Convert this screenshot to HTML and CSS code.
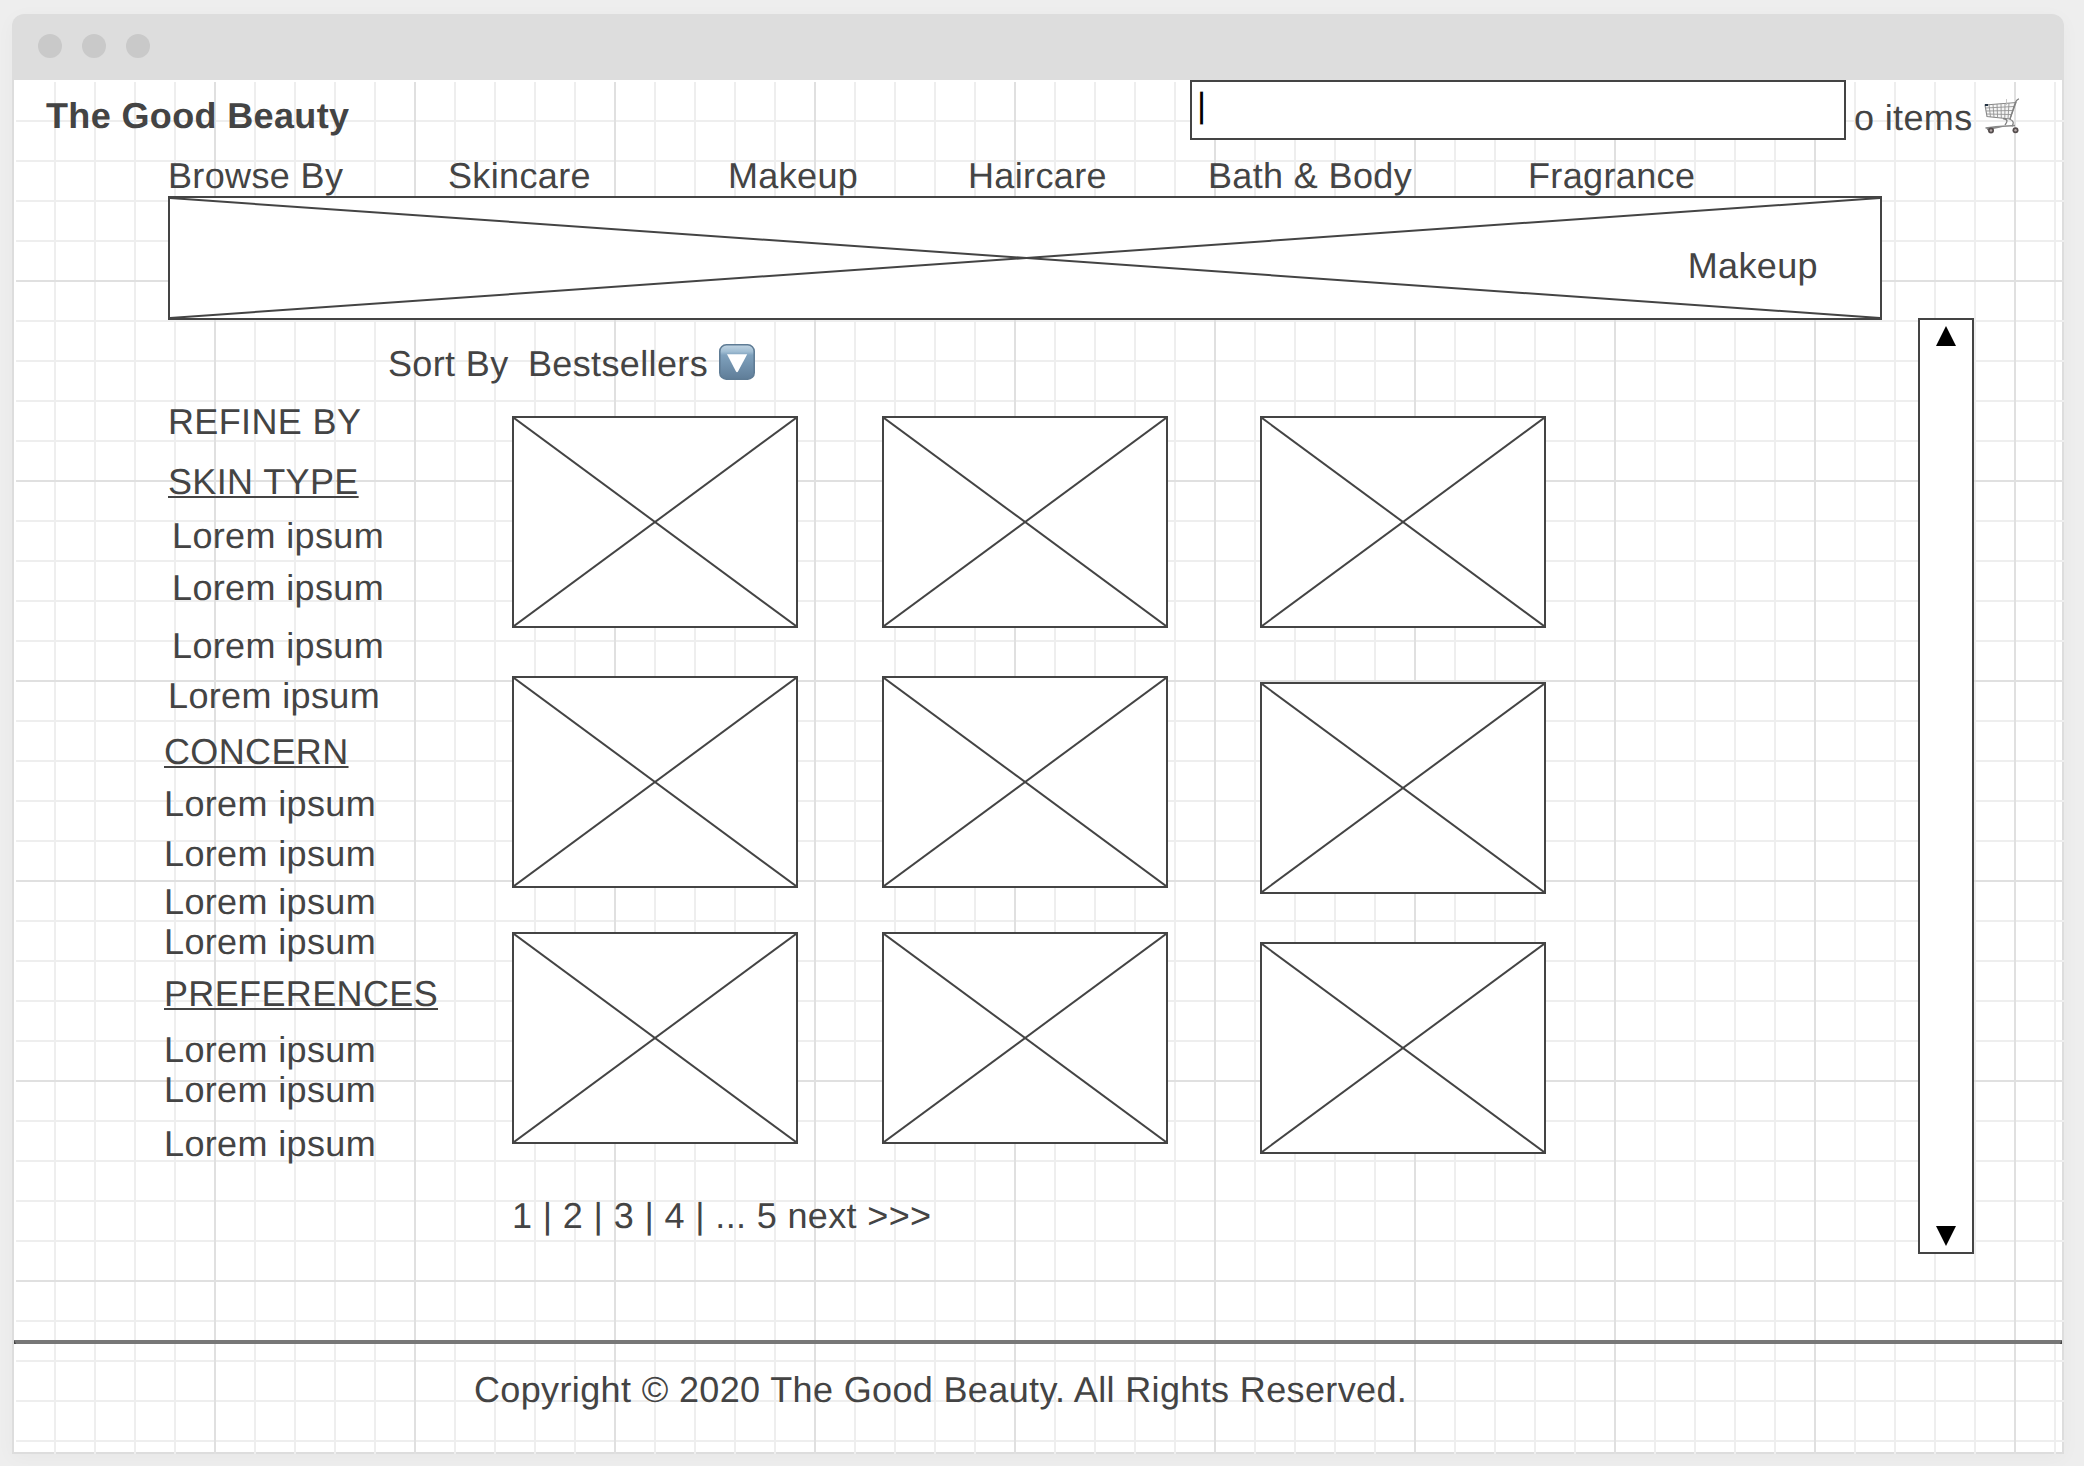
FILE: index.html
```html
<!DOCTYPE html>
<html lang="en">
<head>
<meta charset="utf-8">
<title>The Good Beauty</title>
<link rel="stylesheet" href="styles.css">
</head>
<body>
<svg class="defs" width="0" height="0">
  <symbol id="cross">
    <line x1="0" y1="0" x2="100%" y2="100%"/>
    <line x1="0" y1="100%" x2="100%" y2="0"/>
  </symbol>
</svg>
<div class="window">
  <div class="titlebar"><i></i><i></i><i></i></div>
  <div class="canvas">
    <header class="header">
      <div class="brand">The Good Beauty</div>
      <div class="search">|</div>
      <div class="cart">
        <span>o items</span>
        <svg class="cart-icon" width="36" height="36" viewBox="0 0 36 36" fill="none">
          <path d="M1 7 32 4.500 26 21 3 18.500Z" fill="#f4f4f4" fill-opacity=".8" stroke="#858585" stroke-width="1.100"/>
          <path d="M5 6.700 6.500 19M9 6.400 10 19.300M13 6 13.600 19.700M17 5.700 17.300 20M21 5.400 20.800 20.400M25 5 24 20.800M1.500 10 30 8.500M2 13 29 12.500M2.500 16 27.500 16.500" stroke="#939393" stroke-width=".9"/>
          <path d="M22.500 1V7" stroke="#bbb" stroke-width=".8"/>
          <path d="M35 .8C32 1.500 31.500 4 30.500 7L26 21M19 20.500C25 21.500 23 24 21 27M25.500 21C30 23 30 25 28 28.500" stroke="#808080" stroke-width="1.300"/>
          <path d="M1.500 30C10 28.500 22 28 31 27.500M3 31.500 18 28.500" stroke="#8a8a8a" stroke-width="1.500"/>
          <path d="M1 6h3v2H1z" fill="#234"/>
          <circle cx="7" cy="32.500" r="3" fill="#554e4e"/><circle cx="7" cy="32.500" r="1.200" fill="#b5a9a9"/>
          <circle cx="31.500" cy="32.300" r="3" fill="#554e4e"/><circle cx="31.500" cy="32.300" r="1.200" fill="#b5a9a9"/>
        </svg>
      </div>
    </header>
    <nav class="nav">
      <a>Browse By</a><a>Skincare</a><a>Makeup</a><a>Haircare</a><a>Bath &amp; Body</a><a>Fragrance</a>
    </nav>
    <section class="banner"><svg><use href="#cross"/></svg><span>Makeup</span></section>
    <div class="content">
      <main class="main">
        <div class="sort">
          <span class="sort-label">Sort By</span><span class="sort-value">Bestsellers</span>
          <svg width="36" height="36" viewBox="0 0 36 36">
            <defs>
              <linearGradient id="face" x2="0" y2="1">
                <stop offset="0" stop-color="#c3d6e4"/><stop offset=".2" stop-color="#a0bdd3"/><stop offset=".3" stop-color="#7fa1bd"/><stop offset="1" stop-color="#5f7d98"/>
              </linearGradient>
            </defs>
            <rect x=".8" y=".8" width="34.400" height="34.400" rx="6.500" fill="url(#face)" stroke="#5f7c95" stroke-width="1.600"/>
            <path d="M8 10.200H28.200L19 27.500Q18 29 17 27.500Z" fill="#fff"/>
          </svg>
        </div>
        <div class="catalog">
          <aside class="filters">
            <div class="title">REFINE BY</div>
            <ul class="group skin">
              <li class="heading">SKIN TYPE</li><li>Lorem ipsum</li><li>Lorem ipsum</li><li>Lorem ipsum</li><li>Lorem ipsum</li>
            </ul>
            <ul class="group concern">
              <li class="heading">CONCERN</li><li>Lorem ipsum</li><li>Lorem ipsum</li><li>Lorem ipsum</li><li>Lorem ipsum</li>
            </ul>
            <ul class="group preferences">
              <li class="heading">PREFERENCES</li><li>Lorem ipsum</li><li>Lorem ipsum</li><li>Lorem ipsum</li>
            </ul>
          </aside>
          <div class="results">
            <div class="products">
              <div class="column">
                <div class="product"><svg><use href="#cross"/></svg></div>
                <div class="product"><svg><use href="#cross"/></svg></div>
                <div class="product"><svg><use href="#cross"/></svg></div>
              </div>
              <div class="column">
                <div class="product"><svg><use href="#cross"/></svg></div>
                <div class="product"><svg><use href="#cross"/></svg></div>
                <div class="product"><svg><use href="#cross"/></svg></div>
              </div>
              <div class="column last">
                <div class="product"><svg><use href="#cross"/></svg></div>
                <div class="product"><svg><use href="#cross"/></svg></div>
                <div class="product"><svg><use href="#cross"/></svg></div>
              </div>
            </div>
            <div class="pages">1 | 2 | 3 | 4 | ... 5 next &gt;&gt;&gt;</div>
          </div>
        </div>
      </main>
      <div class="scrollbar">
        <svg width="20" height="20" viewBox="0 0 20 20"><path d="M10 0 20 20H0Z"/></svg>
        <svg width="20" height="20" viewBox="0 0 20 20"><path d="M0 0H20L10 20Z"/></svg>
      </div>
    </div>
    <hr class="rule">
    <footer class="footer">Copyright © 2020 The Good Beauty. All Rights Reserved.</footer>
  </div>
</div>
</body>
</html>
```
FILE: styles.css
```css
* { box-sizing: border-box; }
body {
  margin: 0;
  padding: 14px 20px 12px 12px;
  height: 1466px;
  background: #eee;
  color: #444;
  font: 36px/40px "Liberation Sans", Arial, sans-serif;
  letter-spacing: .01em;
  text-rendering: geometricPrecision;
  white-space: nowrap;
}
.defs { position: absolute; }
.window {
  display: flex;
  flex-direction: column;
  height: 1440px;
  border-radius: 12px 12px 0 0;
  box-shadow: 0 4px 20px rgba(0, 0, 0, .03);
}
.titlebar {
  display: flex;
  gap: 20px;
  height: 66px;
  padding: 20px 26px;
  border-radius: 12px 12px 0 0;
  background: #ddd;
}
.titlebar i { width: 24px; height: 24px; border-radius: 50%; background: #c9c9c9; }

.canvas {
  position: relative;
  z-index: 0;
  flex: 1;
  border: solid #ddd;
  border-width: 0 2px 2px;
  background: #fff;
}
/* Drafting grid: a fine line every 40px, a stronger one every 200px */
.canvas::before {
  content: "";
  position: absolute;
  z-index: -1;
  inset: 2px -2px -2px 2px;
  background:
    linear-gradient(90deg, transparent 198px, #e0e0e0 198px) 0 0 / 200px 200px,
    linear-gradient(transparent 198px, #e0e0e0 198px) 0 0 / 200px 200px,
    linear-gradient(90deg, transparent 38px, #eee 38px) 0 0 / 40px 40px,
    linear-gradient(transparent 38px, #eee 38px) 0 0 / 40px 40px;
}

.header { display: grid; grid-template-columns: 1144px 656px auto; height: 60px; padding-left: 32px; }
.brand { padding-top: 16px; font-weight: bold; }
.search { padding: 4px 5px; border: 2px solid #444; background: #fff; color: #000; font-size: 35px; }
.cart { display: flex; padding: 18px 0 0 8px; }
.cart-icon { margin-left: 11px; }

.nav {
  display: grid;
  grid-template-columns: 280px 280px 240px 240px 320px auto;
  padding: 16px 0 0 154px;
}

.banner, .product { display: grid; border: 2px solid #444; background: #fff; }
.banner svg, .product svg {
  grid-area: 1 / 1;
  width: 100%;
  height: 100%;
  stroke: #444;
  stroke-width: 2px;
}
.banner { width: 1714px; height: 124px; margin-left: 154px; }
.banner span { grid-area: 1 / 1; justify-self: end; padding: 48px 62px 0 0; }
.product { width: 286px; height: 212px; }

.content { display: flex; gap: 372px; margin-top: -2px; padding-left: 150px; }
.main { width: 1382px; padding-top: 26px; }
.sort { display: flex; padding-left: 224px; }
.sort-label { width: 140px; }
.sort svg { margin-left: 11px; }
.sort-value { min-width: 180px; }
.catalog { display: flex; margin-top: 18px; }
.filters { width: 348px; }
.title { padding-left: 4px; }
.group { display: flex; flex-direction: column; align-items: start; margin: 0; padding: 0; list-style: none; }
.heading {
  text-decoration: underline;
  text-decoration-thickness: 2px;
  text-underline-offset: 2px;
}
.skin { padding: 20px 0 0 8px; }
.skin .heading, .skin li:last-child { margin-left: -4px; }
.skin li:nth-child(2) { margin-top: 14px; }
.skin li:nth-child(3) { margin-top: 12px; }
.skin li:nth-child(4) { margin-top: 18px; }
.skin li:nth-child(5) { margin-top: 10px; }
.concern { padding-top: 16px; }
.concern li:nth-child(2) { margin-top: 12px; }
.concern li:nth-child(3) { margin-top: 10px; }
.concern li:nth-child(4) { margin-top: 8px; }
.preferences { padding-top: 12px; }
.preferences li:nth-child(2) { margin-top: 16px; }
.preferences li:nth-child(4) { margin-top: 14px; }

.results { padding-top: 14px; }
.products { display: flex; gap: 84px; height: 738px; }
.column { display: grid; row-gap: 48px; grid-template-rows: 212px 208px 212px; align-content: start; }
.column.last { margin-left: 8px; row-gap: 54px; grid-template-rows: 212px 206px 212px; }
.pages { margin-top: 42px; }

.scrollbar {
  display: flex;
  flex-direction: column;
  align-items: center;
  justify-content: space-between;
  width: 56px;
  height: 936px;
  padding: 6px 0;
  border: 2px solid #444;
  background: #fff;
}

.rule {
  height: 4px;
  margin: 86px 0 0;
  border: solid #444;
  border-top-color: #777;
  border-width: 4px 2px 0;
}
.footer { padding: 26px 0 0 460px; }
```
